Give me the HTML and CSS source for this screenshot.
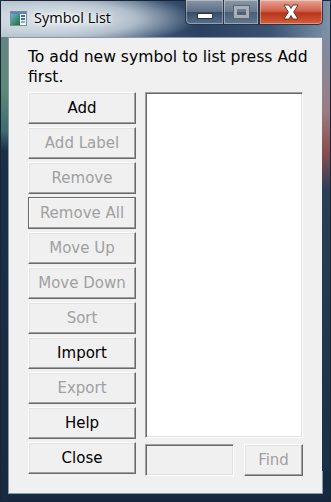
FILE: index.html
```html
<!DOCTYPE html>
<html>
  <head>
    <title>Symbol List</title>
    <meta name="viewport" content="width=device-width, initial-scale=1">
    <link rel="stylesheet" href="styles.css">
  </head>
  <body>
    <div class="window">
      <div class="titlebar">
        <svg class="appicon" width="17" height="15" viewBox="0 0 17 15">
          <defs>
            <linearGradient id="ig" x1="0" y1="0" x2="1" y2="1">
              <stop offset="0" stop-color="#6fb3e0"/>
              <stop offset="0.6" stop-color="#3a8c6a"/>
              <stop offset="1" stop-color="#2c6a48"/>
            </linearGradient>
          </defs>
          <rect x="0.5" y="0.5" width="16" height="14" fill="#f4f6f8" stroke="#7b8a98"/>
          <rect x="1" y="3" width="9" height="11" fill="url(#ig)"/>
          <rect x="1" y="1" width="15" height="2" fill="#5b86b8"/>
          <rect x="11" y="4" width="4" height="2" fill="#3d6fa8"/>
          <rect x="11" y="7" width="4" height="2" fill="#3d6fa8"/>
          <rect x="11" y="10" width="4" height="2" fill="#8fa6bd"/>
        </svg>
        <span class="title">Symbol List</span>
        <div class="controls">
          <div class="ctl min"><i></i></div>
          <div class="ctl max"><i></i></div>
          <div class="ctl close">
            <svg width="20" height="16" viewBox="0 0 20 16">
              <path d="M3 1 H8 L10 4.5 L12 1 H17 L12.6 8 L17 15 H12 L10 11.5 L8 15 H3 L7.4 8 Z" fill="#fff" stroke="#5a1a10" stroke-width="0.8"/>
            </svg>
          </div>
        </div>
      </div>
      <div class="client">
        <p class="prompt">To add new symbol to list press Add first.</p>
        <div class="main">
          <div class="buttons">
            <button class="btn">Add</button>
            <button class="btn off">Add Label</button>
            <button class="btn off">Remove</button>
            <button class="btn off focus">Remove All</button>
            <button class="btn off">Move Up</button>
            <button class="btn off">Move Down</button>
            <button class="btn off">Sort</button>
            <button class="btn">Import</button>
            <button class="btn off">Export</button>
            <button class="btn">Help</button>
            <button class="btn">Close</button>
          </div>
          <div class="side">
            <div class="listbox"></div>
            <div class="findrow">
              <div class="textbox"></div>
              <button class="btn off find">Find</button>
            </div>
          </div>
        </div>
      </div>
    </div>
  </body>
</html>
```

FILE: styles.css
```css
html, body {
  margin: 0;
  padding: 0;
}
body {
  width: 331px;
  height: 502px;
  overflow: hidden;
  background: #1b2d44;
}
.window {
  position: relative;
  width: 331px;
  height: 502px;
  box-sizing: border-box;
  border: 1px solid #1a2533;
  border-radius: 6px 6px 0 0;
  background: linear-gradient(180deg, #6a7f8c 0, #5c8a78 90px, #3f6a70 130px, #1b2f48 150px, #182a42 100%);
  display: flex;
  flex-direction: column;
  font-family: "DejaVu Sans", sans-serif;
}
.window::after {
  content: "";
  position: absolute;
  right: 0;
  top: 30px;
  width: 8px;
  height: 440px;
  background: linear-gradient(180deg, #7b8fa4 0, #9a7c84 80px, #8a4e52 120px, #2a3e58 160px, #1b2f48 100%);
}
.titlebar {
  height: 36px;
  display: flex;
  align-items: flex-start;
  padding-left: 9px;
  background:
    radial-gradient(ellipse 130px 28px at 65px 18px, rgba(238,242,246,0.95) 0, rgba(215,225,232,0.7) 55%, rgba(200,212,224,0) 100%),
    linear-gradient(90deg, #aab8c4 0, #6d8198 90px, #3c5574 150px, #2a4262 200px, #3b5372 270px, #8094aa 331px);
}
.appicon {
  margin-top: 10px;
}
.title {
  margin: 7px 0 0 7px;
  font-family: "Open Sans", "DejaVu Sans", sans-serif;
  font-size: 14.5px;
  color: #000;
  text-shadow: 0 0 6px #fff, 0 0 3px #fff;
}
.controls {
  margin-left: auto;
  margin-right: 7px;
  display: flex;
  height: 26px;
  margin-top: -1px;
}
.ctl {
  height: 25px;
  box-sizing: border-box;
  border: 1px solid #2a3444;
  border-top: none;
  display: flex;
  align-items: center;
  justify-content: center;
  box-shadow: inset 0 0 0 1px rgba(255,255,255,0.35);
}
.min {
  width: 38px;
  border-radius: 0 0 0 5px;
  border-right: none;
  background: linear-gradient(180deg, #8795a6 0, #5e6f84 48%, #3b4d66 52%, #56708c 100%);
}
.min i {
  display: block;
  width: 14px;
  height: 4px;
  margin-top: 7px;
  background: #fff;
  border: 1px solid #2a3444;
}
.max {
  width: 36px;
  background: linear-gradient(180deg, #8a98a8 0, #6a7a8c 48%, #4c5e74 52%, #60788f 100%);
}
.max i {
  display: block;
  width: 9px;
  height: 6px;
  border: 3px solid #a8b0ba;
  outline: 1px solid #5a6676;
}
.close {
  width: 64px;
  border-radius: 0 0 5px 0;
  background: linear-gradient(180deg, #e4a496 0, #d0624c 45%, #b8341c 55%, #d2603c 100%);
}
.client {
  flex: 1;
  margin: 0 7px 7px 7px;
  background: #f0f0f0;
  border: 1px solid #8c9aa8;
  padding: 9px 19px 0 19px;
  color: #000;
}
.prompt {
  margin: 0 -14px 0 0;
  font-size: 15.6px;
  line-height: 20px;
}
.main {
  display: flex;
  gap: 9px;
  margin-top: 5px;
}
.buttons {
  display: flex;
  flex-direction: column;
  gap: 3px;
  width: 108px;
}
.btn {
  height: 32px;
  width: 108px;
  box-sizing: border-box;
  background: #f0f0f0;
  border: 1px solid;
  border-color: #fcfcfc #696969 #696969 #fcfcfc;
  box-shadow: inset -1px -1px #a0a0a0, inset 1px 1px #e3e3e3;
  font-family: "DejaVu Sans", sans-serif;
  font-size: 15px;
  color: #000;
  padding: 0;
}
.btn.off {
  color: #a0a0a0;
}
.btn.focus {
  border-color: #696969;
  box-shadow: inset -1px -1px #a0a0a0, inset 1px 1px #fcfcfc;
}
.side {
  display: flex;
  flex-direction: column;
  gap: 6px;
  width: 159px;
}
.listbox {
  height: 346px;
  box-sizing: border-box;
  background: #fff;
  border: 1px solid;
  border-color: #a0a0a0 #fcfcfc #fcfcfc #a0a0a0;
  box-shadow: inset 1px 1px #696969, inset -1px -1px #e3e3e3;
}
.findrow {
  display: flex;
  justify-content: space-between;
}
.textbox {
  width: 89px;
  height: 32px;
  box-sizing: border-box;
  background: #f0f0f0;
  border: 1px solid;
  border-color: #a0a0a0 #fcfcfc #fcfcfc #a0a0a0;
  box-shadow: inset 1px 1px #696969, inset -1px -1px #e3e3e3;
}
.btn.find {
  width: 59px;
}
```
